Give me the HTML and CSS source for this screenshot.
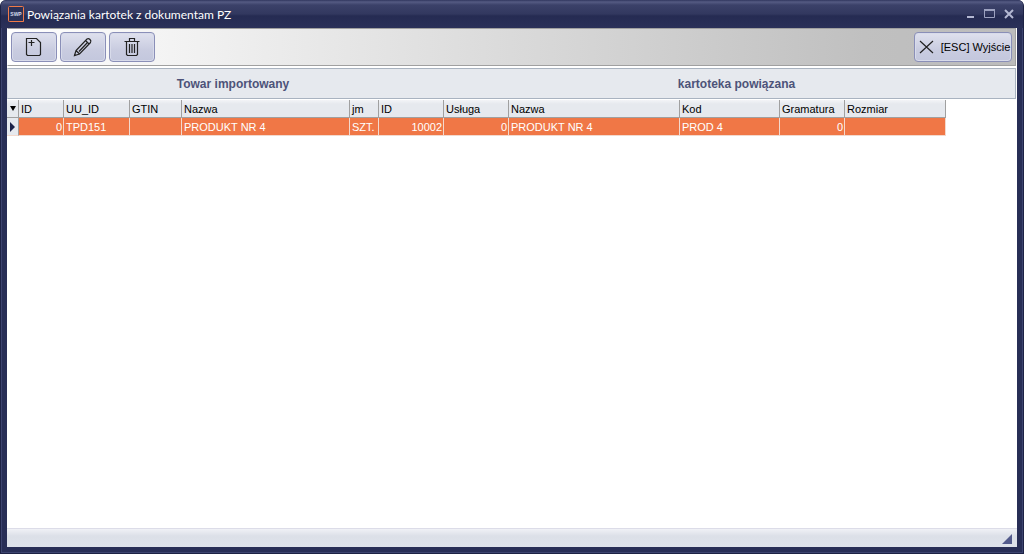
FILE: index.html
```html
<!DOCTYPE html>
<html lang="pl">
<head>
    <meta charset="UTF-8">
    <meta name="viewport" content="width=device-width, initial-scale=1.0">
    <title>Powiązania kartotek z dokumentam PZ</title>
    <link rel="stylesheet" href="styles.css">
</head>
<body>
    <div class="window">
        <header class="titlebar">
            <svg class="logo" width="16" height="16" viewBox="0 0 16 16">
                <rect x="0.5" y="0.5" width="15" height="15" rx="1" fill="#2b3157" stroke="#f07a48"/>
                <path d="M15.5 8v7.5H9" fill="none" stroke="#f07a48"/>
                <text x="8" y="10" text-anchor="middle">SWP</text>
            </svg>
            <h1>Powiązania kartotek z dokumentam PZ</h1>
            <div class="controls">
                <button type="button" aria-label="Minimalizuj">
                    <svg width="12" height="12" viewBox="0 0 12 12"><path d="M2 9h7" stroke="#b4b8d2" stroke-width="2"/></svg>
                </button>
                <button type="button" aria-label="Maksymalizuj">
                    <svg width="12" height="12" viewBox="0 0 12 12"><path d="M.5 1.5h10v8H.5z" fill="none" stroke="#9da2c0"/><path d="M0 2h11" stroke="#9da2c0" stroke-width="2"/></svg>
                </button>
                <button type="button" aria-label="Zamknij">
                    <svg width="12" height="12" viewBox="0 0 12 12"><path d="M2 2l8 8M10 2l-8 8" stroke="#b4b8d2" stroke-width="2"/></svg>
                </button>
            </div>
        </header>

        <main class="client">
            <div class="toolbar">
                <button type="button" class="tool" aria-label="Dodaj">
                    <svg width="20" height="20" viewBox="0 0 20 20">
                        <path d="M2.5 1.5h10l4 4v12l-1 1h-12l-1-1zM7.5 3v6M4.500 5.500h6"/>
                    </svg>
                </button>
                <button type="button" class="tool" aria-label="Edytuj">
                    <svg width="20" height="20" viewBox="0 0 20 20">
                        <path d="M1.500 18.500l1.500-5L14 2q1.500-1 3 .5t.5 3L6.500 17zM12.500 3.500l4 4M3 13.500l3.500 3.500M14 6l-8 8.500"/>
                    </svg>
                </button>
                <button type="button" class="tool" aria-label="Usuń">
                    <svg width="20" height="20" viewBox="0 0 20 20">
                        <path d="M2.500 4.500h15M7.500 4V1.500h5V4M4.500 5v12.500l1 1h9l1-1V5M7.500 7v9M10 7v9M12.500 7v9"/>
                    </svg>
                </button>
                <button type="button" class="tool exit">
                    <svg width="16" height="16" viewBox="0 0 16 16"><path d="M2 2l13 12M15 2L2 14"/></svg>
                    [ESC] Wyjście
                </button>
            </div>

            <div class="groups">
                <h2 class="source">Towar importowany</h2>
                <h2 class="linked">kartoteka powiązana</h2>
            </div>

            <div class="grid">
                <table>
                    <colgroup>
                        <col class="w-mark"><col class="w-id"><col class="w-uuid"><col class="w-gtin">
                        <col class="w-name"><col class="w-unit"><col class="w-num"><col class="w-num">
                        <col class="w-name2"><col class="w-code"><col class="w-num"><col class="w-size">
                    </colgroup>
                    <thead>
                        <tr>
                            <th class="mark"><svg width="6" height="5" viewBox="0 0 6 5"><path d="M0 0h6L3 5z" fill="#000"/></svg></th>
                            <th>ID</th>
                            <th>UU_ID</th>
                            <th>GTIN</th>
                            <th>Nazwa</th>
                            <th>jm</th>
                            <th>ID</th>
                            <th>Usługa</th>
                            <th>Nazwa</th>
                            <th>Kod</th>
                            <th>Gramatura</th>
                            <th>Rozmiar</th>
                        </tr>
                    </thead>
                    <tbody>
                        <tr class="selected">
                            <td class="mark"><svg width="5" height="10" viewBox="0 0 5 10"><path d="M0 0l5 5-5 5z" fill="#1c2248"/></svg></td>
                            <td class="num">0</td>
                            <td>TPD151</td>
                            <td></td>
                            <td>PRODUKT NR 4</td>
                            <td>SZT.</td>
                            <td class="num">10002</td>
                            <td class="num">0</td>
                            <td>PRODUKT NR 4</td>
                            <td>PROD 4</td>
                            <td class="num">0</td>
                            <td></td>
                        </tr>
                    </tbody>
                </table>
            </div>

            <footer class="statusbar">
                <svg width="10" height="10" viewBox="0 0 10 10"><path d="M10 0v10H0z" fill="#535b8c"/></svg>
            </footer>
        </main>
    </div>
</body>
</html>
```
FILE: styles.css
```css
* {
    box-sizing: border-box;
}

body {
    margin: 0;
    background: #fff;
    font-family: "Liberation Sans", Arial, sans-serif;
    font-size: 12px;
    color: #000;
}

/* Window frame */
.window {
    display: flex;
    flex-direction: column;
    height: 100vh;
    padding: 0 6px 6px;
    border: 1px solid #1d2244;
    border-top: 0;
    border-radius: 6px 6px 0 0;
    background: #282e56;
    box-shadow: inset 1px -1px 0 #3d446f, inset -1px 0 0 #3d446f;
}

.titlebar {
    display: flex;
    align-items: center;
    height: 28px;
    margin: 0 -6px;
    padding: 0 8px 0 7px;
    border-radius: 6px 6px 0 0;
    background: linear-gradient(#30365e 0, #555b83 2px, #3b4169 5px, #32385f 14px, #252b52 16px, #2a3058 28px);
}

.logo text {
    font-size: 5px;
    font-weight: bold;
    fill: #d5d8e8;
}

h1 {
    flex: 1;
    margin: 0 0 0 3px;
    font-family: Lato, "Open Sans", sans-serif;
    font-size: 12px;
    font-weight: normal;
    color: #fff;
}

.controls {
    display: flex;
    gap: 7px;
}

.controls button {
    display: flex;
    padding: 0;
    border: 0;
    background: none;
}

.client {
    flex: 1;
    display: flex;
    flex-direction: column;
    min-height: 0;
    background: #fff;
}

/* Toolbar */
.toolbar {
    display: flex;
    align-items: center;
    gap: 3px;
    height: 38px;
    margin-right: 1px;
    padding: 0 3px;
    border: 1px solid #a0a0a0;
    border-left-color: #fff;
    background: linear-gradient(to right, #fff, #c0c0c0 85%, #bcbcbc);
}

.tool {
    display: flex;
    align-items: center;
    justify-content: center;
    width: 46px;
    height: 30px;
    padding: 0;
    border: 1px solid #8a8fb8;
    border-radius: 4px;
    background: linear-gradient(#dfe1ee, #c9cce0 60%, #c3c7dd);
    box-shadow: inset 0 0 0 1px #d8dbea;
    font: inherit;
    color: #000;
}

.tool svg {
    fill: none;
    stroke: #222;
    stroke-width: 1.2;
}

.exit {
    gap: 7px;
    width: 98px;
    margin-left: auto;
    padding-left: 2px;
    font-size: 11px;
    white-space: nowrap;
}

/* Group captions */
.groups {
    display: flex;
    align-items: center;
    height: 31px;
    margin: 2px 1px 1px 0;
    border: 1px solid #a9b3c0;
    border-left-color: #d5dae2;
    background: #e6e9ee;
}

h2 {
    margin: 0;
    font-size: 12px;
    color: #4d5379;
    text-align: center;
}

.source {
    width: 450px;
}

.linked {
    flex: 1;
}

/* Data grid */
.grid {
    flex: 1;
    overflow: hidden;
}

table {
    border-collapse: separate;
    border-spacing: 0;
    table-layout: fixed;
    width: 939px;
}

.w-mark { width: 12px; }
.w-id { width: 45px; }
.w-uuid { width: 66px; }
.w-gtin { width: 52px; }
.w-name { width: 168px; }
.w-unit { width: 29px; }
.w-num { width: 65px; }
.w-name2 { width: 171px; }
.w-code { width: 100px; }
.w-size { width: 101px; }

th,
td {
    height: 18px;
    padding: 0 1px 0 2px;
    font-size: 11px;
    font-weight: normal;
    line-height: 16px;
    text-align: left;
    white-space: nowrap;
}

th {
    border-right: 1px solid #a0a0a0;
    border-bottom: 1px solid #a0a0a0;
    background: linear-gradient(#f3f4f7, #e6e9ee 4px);
}

.selected td {
    border-right: 1px solid #f3d9cd;
    border-bottom: 1px solid #f3d9cd;
    background: #f07746;
    color: #fff;
}

td.num {
    text-align: right;
}

th.mark,
.selected .mark {
    padding: 0;
    border-right-color: #a0a0a0;
    text-align: center;
}

.selected .mark {
    background: #e6e9ee;
}

.mark svg {
    display: block;
    margin: 0 auto;
}

/* Status bar */
.statusbar {
    display: flex;
    align-items: flex-end;
    justify-content: flex-end;
    height: 19px;
    padding: 0 5px 3px;
    border-top: 1px solid #dcdce8;
    background: linear-gradient(#f0f1f6, #dce0e8 7px, #dee2ea);
}
```
